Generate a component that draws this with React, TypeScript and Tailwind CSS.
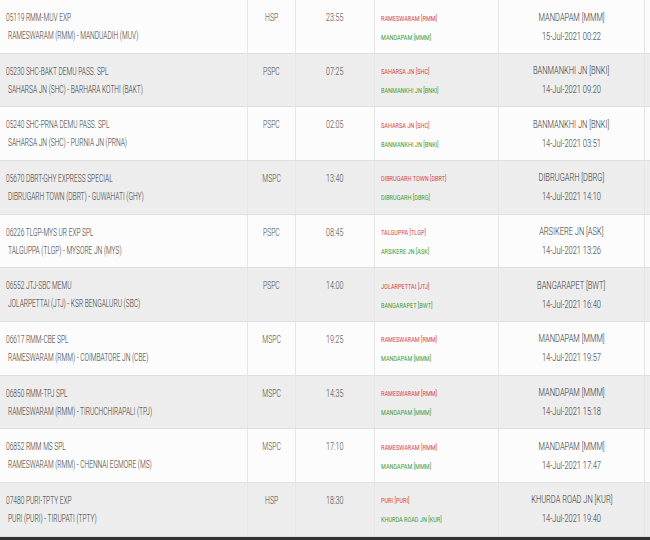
const rows = [
  ["05119 RMM-MUV EXP", "RAMESWARAM (RMM) - MANDUADIH (MUV)", "HSP", "23:55", "RAMESWARAM [RMM]", "MANDAPAM [MMM]", "MANDAPAM [MMM]", "15-Jul-2021 00:22"],
  ["05230 SHC-BAKT DEMU PASS. SPL", "SAHARSA JN (SHC) - BARHARA KOTHI (BAKT)", "PSPC", "07:25", "SAHARSA JN [SHC]", "BANMANKHI JN [BNKI]", "BANMANKHI JN [BNKI]", "14-Jul-2021 09:20"],
  ["05240 SHC-PRNA DEMU PASS. SPL", "SAHARSA JN (SHC) - PURNIA JN (PRNA)", "PSPC", "02:05", "SAHARSA JN [SHC]", "BANMANKHI JN [BNKI]", "BANMANKHI JN [BNKI]", "14-Jul-2021 03:51"],
  ["05670 DBRT-GHY EXPRESS SPECIAL", "DIBRUGARH TOWN (DBRT) - GUWAHATI (GHY)", "MSPC", "13:40", "DIBRUGARH TOWN [DBRT]", "DIBRUGARH [DBRG]", "DIBRUGARH [DBRG]", "14-Jul-2021 14:10"],
  ["06226 TLGP-MYS UR EXP SPL", "TALGUPPA (TLGP) - MYSORE JN (MYS)", "PSPC", "08:45", "TALGUPPA [TLGP]", "ARSIKERE JN [ASK]", "ARSIKERE JN [ASK]", "14-Jul-2021 13:26"],
  ["06552 JTJ-SBC MEMU", "JOLARPETTAI (JTJ) - KSR BENGALURU (SBC)", "PSPC", "14:00", "JOLARPETTAI [JTJ]", "BANGARAPET [BWT]", "BANGARAPET [BWT]", "14-Jul-2021 16:40"],
  ["06617 RMM-CBE SPL", "RAMESWARAM (RMM) - COIMBATORE JN (CBE)", "MSPC", "19:25", "RAMESWARAM [RMM]", "MANDAPAM [MMM]", "MANDAPAM [MMM]", "14-Jul-2021 19:57"],
  ["06850 RMM-TPJ SPL", "RAMESWARAM (RMM) - TIRUCHCHIRAPALI (TPJ)", "MSPC", "14:35", "RAMESWARAM [RMM]", "MANDAPAM [MMM]", "MANDAPAM [MMM]", "14-Jul-2021 15:18"],
  ["06852 RMM MS SPL", "RAMESWARAM (RMM) - CHENNAI EGMORE (MS)", "MSPC", "17:10", "RAMESWARAM [RMM]", "MANDAPAM [MMM]", "MANDAPAM [MMM]", "14-Jul-2021 17:47"],
  ["07480 PURI-TPTY EXP", "PURI (PURI) - TIRUPATI (TPTY)", "HSP", "18:30", "PURI [PURI]", "KHURDA ROAD JN [KUR]", "KHURDA ROAD JN [KUR]", "14-Jul-2021 19:40"],
];

// The screenshot's text is squeezed sideways, so each run is narrowed with scale-x.
function Left({ children, className = "" }: { children: string; className?: string }) {
  return (
    <div className="whitespace-nowrap">
      <span className={`inline-block origin-left scale-x-[0.66] ${className}`}>{children}</span>
    </div>
  );
}

function Mid({ children, className = "" }: { children: string; className?: string }) {
  return (
    <div className="whitespace-nowrap text-center">
      <span className={`inline-block origin-center scale-x-[0.68] ${className}`}>{children}</span>
    </div>
  );
}

export default function App() {
  return (
    <div className="h-[540px] w-[650px] overflow-hidden bg-[#fcfcfc] font-['Roboto',sans-serif] font-light text-[#333]">
      {rows.map((r, i) => (
        <div
          key={r[0]}
          className={`grid h-[53.66px] grid-cols-[248px_48px_79px_124px_146px_5px] border-b border-[#e0e0e0] ${
            i % 2 ? "bg-[#ededed]" : "bg-[#fcfcfc]"
          }`}
        >
          <div className="border-r border-[#e6e6e6] pl-[6px] pt-[9px] text-[10px] leading-[18px]">
            <Left>{r[0]}</Left>
            <Left className="pl-[3px]">{r[1]}</Left>
          </div>
          <div className="border-r border-[#e6e6e6] pt-[9px] text-[10px] leading-[18px] text-[#444]">
            <Mid>{r[2]}</Mid>
          </div>
          <div className="border-r border-[#e6e6e6] pt-[9px] text-[10.5px] leading-[18px] text-[#444]">
            <Mid>{r[3]}</Mid>
          </div>
          <div className="border-r border-[#e6e6e6] pl-[6px] pt-[8.5px] text-[7.5px] font-normal leading-[19px]">
            <div className="whitespace-nowrap">
              <span className="inline-block origin-left scale-x-[0.74] text-[#d9443f]">{r[4]}</span>
            </div>
            <div className="whitespace-nowrap">
              <span className="inline-block origin-left scale-x-[0.74] text-[#3f9a36]">{r[5]}</span>
            </div>
          </div>
          <div className="border-r border-[#e6e6e6] pt-[7.5px] text-[11px] leading-[19px] text-[#333]">
            <Mid>{r[6]}</Mid>
            <Mid>{r[7]}</Mid>
          </div>
          <div />
        </div>
      ))}
      <div className="h-[4px] bg-[#333]" />
    </div>
  );
}
